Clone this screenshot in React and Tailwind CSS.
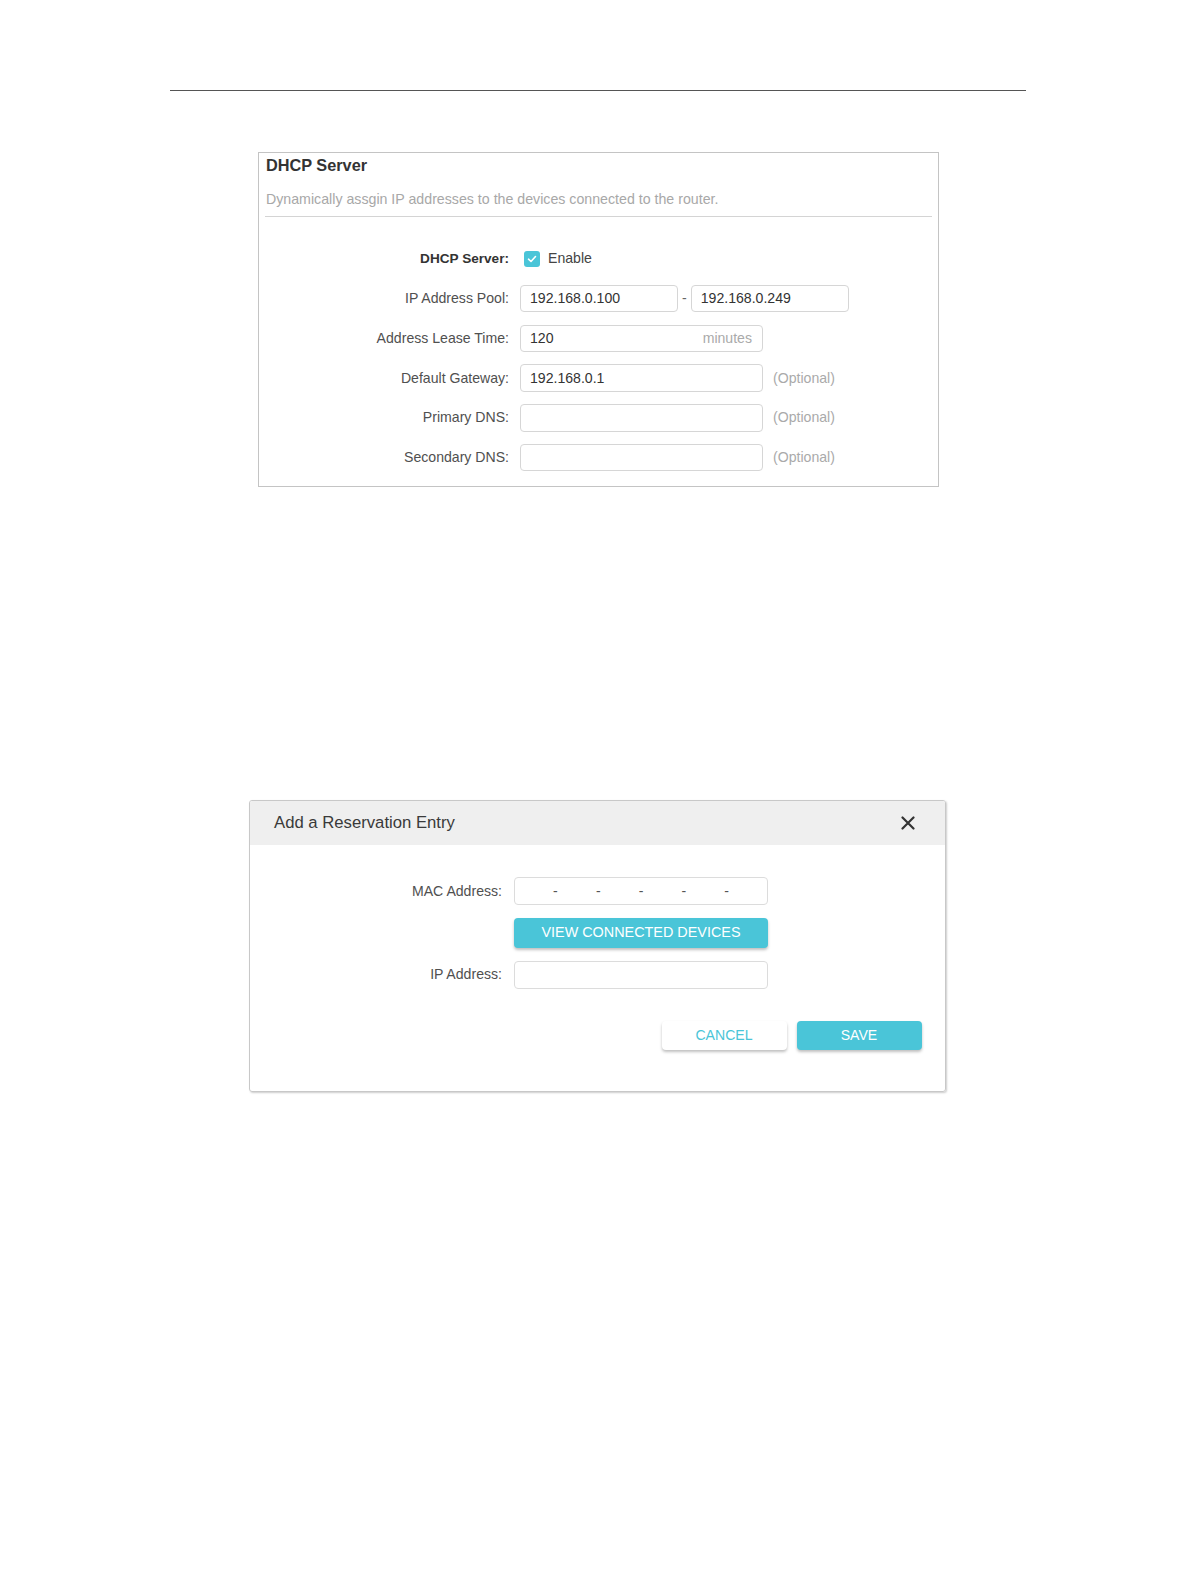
import React from "react";

const font = { fontFamily: '"Liberation Sans", Arial, sans-serif' };

function Row({ label, bold, children }) {
  return (
    <div className="flex h-[39.75px] items-center">
      <div className={`w-[250px] text-right ${bold ? "font-bold text-[#333] text-[13.6px]" : "text-[14.1px] text-[#505050]"}`}>
        {label}
      </div>
      <div className="ml-[11px] flex items-center">{children}</div>
    </div>
  );
}

function Input({ value, w = "w-[243px]", suffix }) {
  return (
    <div className={`${w} flex h-[27.5px] items-center justify-between rounded-[4px] border border-[#d6d6d6] bg-white pl-[9px] pr-[10px] text-[14.1px] text-[#333]`}>
      <span>{value}</span>
      {suffix && <span className="text-[#aaa]">{suffix}</span>}
    </div>
  );
}

function Optional() {
  return <span className="ml-[10px] text-[14.1px] text-[#aaa]">(Optional)</span>;
}

function Button({ children, primary, w, size = "text-[14.1px]" }) {
  return (
    <div
      className={`${w} ${size} flex items-center justify-center rounded-[4px] uppercase shadow-[0_2px_3px_rgba(0,0,0,0.25)] ${
        primary ? "bg-[#4ac5d8] text-white" : "bg-white text-[#4ac5d8]"
      }`}
    >
      {children}
    </div>
  );
}

export default function App() {
  return (
    <div className="bg-white pb-[400px]" style={font}>
      <div className="pt-[90px]">
        <div className="ml-[170px] h-px w-[856px] bg-[#555]" />
      </div>

      {/* DHCP Server box */}
      <div className="ml-[258px] mt-[61px] h-[335px] w-[681px] border border-[#c4c4c4]">
        <div className="mx-[6px] border-b border-[#d4d4d4] pb-[6.5px] pl-px pt-[2px]">
          <div className="text-[16.3px] font-bold leading-[20px] text-[#333]">DHCP Server</div>
          <div className="mt-[14px] text-[14.2px] leading-[20px] text-[#a8a8a8]">
            Dynamically assgin IP addresses to the devices connected to the router.
          </div>
        </div>
        <div className="mt-[22.5px]">
          <Row label="DHCP Server:" bold>
            <div className="ml-[4px] flex items-center">
              <div className="flex h-[16px] w-[16px] items-center justify-center rounded-[3px] bg-[#4ac5d8]">
                <svg width="10" height="8" viewBox="0 0 10 8" fill="none">
                  <path d="M1.5 4.2 L4 6.5 L8.5 1.5" stroke="white" strokeWidth="1.6" strokeLinecap="round" strokeLinejoin="round" />
                </svg>
              </div>
              <span className="ml-[8px] text-[14.1px] text-[#444]">Enable</span>
            </div>
          </Row>
          <Row label="IP Address Pool:">
            <Input value="192.168.0.100" w="w-[158px]" />
            <span className="mx-[4px] text-[14.1px] text-[#666]">-</span>
            <Input value="192.168.0.249" w="w-[158px]" />
          </Row>
          <Row label="Address Lease Time:">
            <Input value="120" suffix="minutes" />
          </Row>
          <Row label="Default Gateway:">
            <Input value="192.168.0.1" />
            <Optional />
          </Row>
          <Row label="Primary DNS:">
            <Input value="" />
            <Optional />
          </Row>
          <Row label="Secondary DNS:">
            <Input value="" />
            <Optional />
          </Row>
        </div>
      </div>

      {/* Reservation dialog */}
      <div className="ml-[249px] mt-[313px] h-[292px] w-[697px] overflow-hidden rounded-[3px] border border-[#c8c8c8] shadow-[1px_1px_2px_rgba(0,0,0,0.2)]">
        <div className="flex h-[44px] items-center justify-between bg-[#efefef] pl-[24px] pr-[30px]">
          <span className="text-[16.7px] text-[#3a3a3a]">Add a Reservation Entry</span>
          <svg width="14" height="14" viewBox="0 0 14 14">
            <path d="M1.5 1.5 L12.5 12.5 M12.5 1.5 L1.5 12.5" stroke="#333" strokeWidth="2.2" strokeLinecap="round" />
          </svg>
        </div>
        <div className="pt-[32px]">
          <div className="flex h-[28.3px] items-center">
            <div className="w-[252px] text-right text-[14.1px] text-[#505050]">MAC Address:</div>
            <div className="ml-[12px] flex h-[28.3px] w-[254px] items-center rounded-[4px] border border-[#dcdcdc] text-[14px] text-[#555]">
              <span className="flex-1" />
              <span>-</span>
              <span className="flex-1" />
              <span>-</span>
              <span className="flex-1" />
              <span>-</span>
              <span className="flex-1" />
              <span>-</span>
              <span className="flex-1" />
              <span>-</span>
              <span className="flex-1" />
            </div>
          </div>
          <div className="ml-[264px] mt-[13px] flex h-[29.3px] w-[254px]">
            <Button primary w="w-[254px]" size="text-[14.4px]">View Connected Devices</Button>
          </div>
          <div className="mt-[13px] flex h-[28.3px] items-center">
            <div className="w-[252px] text-right text-[14.1px] text-[#505050]">IP Address:</div>
            <div className="ml-[12px] h-[28.3px] w-[254px] rounded-[4px] border border-[#dcdcdc]" />
          </div>
          <div className="mr-[23.5px] mt-[32px] flex h-[29.4px] justify-end gap-[10px]">
            <Button w="w-[125px]">Cancel</Button>
            <Button primary w="w-[125px]">Save</Button>
          </div>
        </div>
      </div>
    </div>
  );
}
